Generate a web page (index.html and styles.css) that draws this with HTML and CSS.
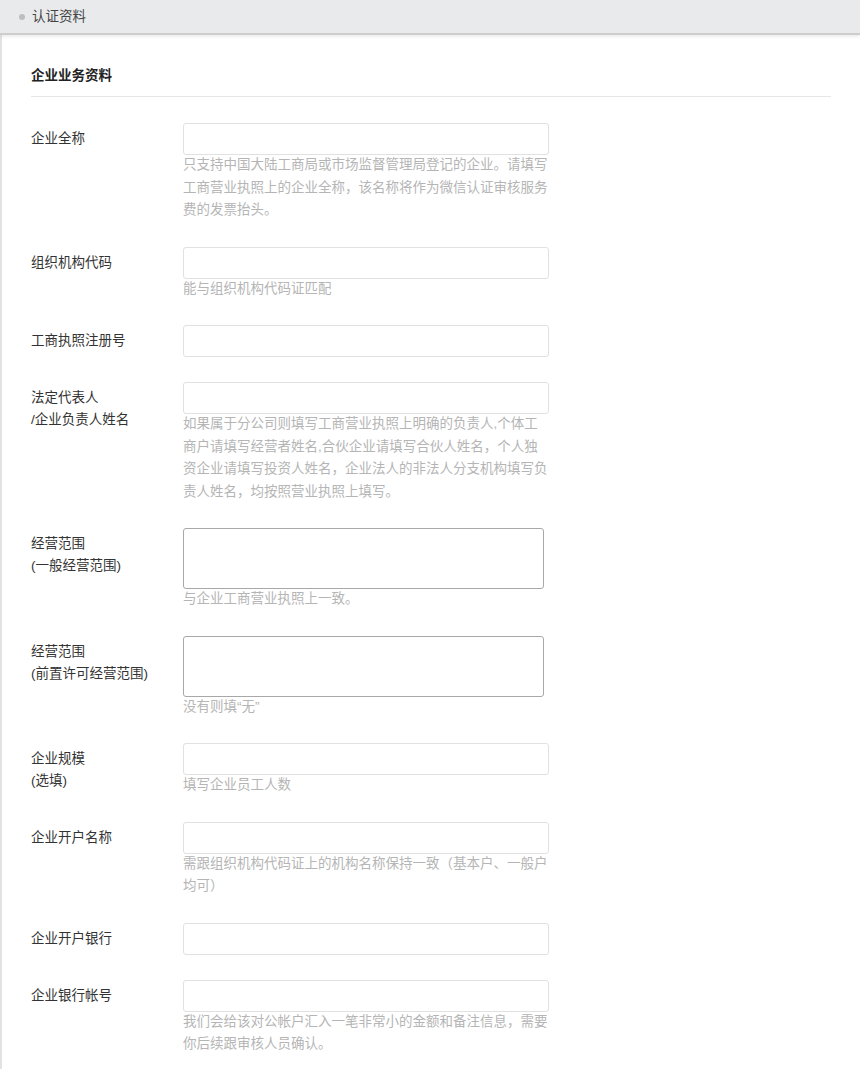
FILE: index.html
```html
<!DOCTYPE html>
<html lang="zh-CN">
<head>
    <meta charset="UTF-8">
    <meta name="viewport" content="width=device-width, initial-scale=1.0">
    <title>认证资料</title>
    <link rel="stylesheet" href="styles.css">
</head>
<body>
    <div class="page-header">
        <span class="dot"></span>
        <span class="page-title">认证资料</span>
    </div>

    <div class="content">
        <div class="section-title">企业业务资料</div>

        <div class="form-row">
            <div class="form-label">企业全称</div>
            <div class="form-field">
                <input type="text" class="text-input">
                <p class="hint">只支持中国大陆工商局或市场监督管理局登记的企业。请填写工商营业执照上的企业全称，该名称将作为微信认证审核服务费的发票抬头。</p>
            </div>
        </div>

        <div class="form-row">
            <div class="form-label">组织机构代码</div>
            <div class="form-field">
                <input type="text" class="text-input">
                <p class="hint">能与组织机构代码证匹配</p>
            </div>
        </div>

        <div class="form-row">
            <div class="form-label">工商执照注册号</div>
            <div class="form-field">
                <input type="text" class="text-input">
            </div>
        </div>

        <div class="form-row">
            <div class="form-label">法定代表人<br>/企业负责人姓名</div>
            <div class="form-field">
                <input type="text" class="text-input">
                <p class="hint">如果属于分公司则填写工商营业执照上明确的负责人,个体工商户请填写经营者姓名,合伙企业请填写合伙人姓名，个人独资企业请填写投资人姓名，企业法人的非法人分支机构填写负责人姓名，均按照营业执照上填写。</p>
            </div>
        </div>

        <div class="form-row">
            <div class="form-label">经营范围<br>(一般经营范围)</div>
            <div class="form-field">
                <textarea class="text-area"></textarea>
                <p class="hint">与企业工商营业执照上一致。</p>
            </div>
        </div>

        <div class="form-row">
            <div class="form-label">经营范围<br>(前置许可经营范围)</div>
            <div class="form-field">
                <textarea class="text-area"></textarea>
                <p class="hint">没有则填“无”</p>
            </div>
        </div>

        <div class="form-row">
            <div class="form-label">企业规模<br>(选填)</div>
            <div class="form-field">
                <input type="text" class="text-input">
                <p class="hint">填写企业员工人数</p>
            </div>
        </div>

        <div class="form-row">
            <div class="form-label">企业开户名称</div>
            <div class="form-field">
                <input type="text" class="text-input">
                <p class="hint">需跟组织机构代码证上的机构名称保持一致（基本户、一般户均可）</p>
            </div>
        </div>

        <div class="form-row">
            <div class="form-label">企业开户银行</div>
            <div class="form-field">
                <input type="text" class="text-input">
            </div>
        </div>

        <div class="form-row">
            <div class="form-label">企业银行帐号</div>
            <div class="form-field">
                <input type="text" class="text-input">
                <p class="hint">我们会给该对公帐户汇入一笔非常小的金额和备注信息，需要你后续跟审核人员确认。</p>
            </div>
        </div>
    </div>
</body>
</html>
```

FILE: styles.css
```css
* {
    margin: 0;
    padding: 0;
    box-sizing: border-box;
}

body {
    font-family: "Liberation Sans", "Noto Sans CJK SC", sans-serif;
    font-size: 13.5px;
    color: #333;
    background: #fff;
}

.page-header {
    height: 35px;
    background: #e9eaec;
    border-bottom: 2px solid #cdcdcd;
    box-shadow: 0 2px 3px rgba(0,0,0,0.07);
    display: flex;
    align-items: center;
    padding-left: 19px;
    position: relative;
    z-index: 1;
}

.dot {
    width: 6px;
    height: 6px;
    border-radius: 50%;
    background: #bdbdbd;
    margin-right: 7px;
}

.page-title {
    color: #444;
    line-height: 22px;
}

.content {
    border-left: 2px solid #e2e2e2;
    padding: 30px 0 0 29px;
    min-height: 1034px;
}

.section-title {
    width: 800px;
    font-weight: bold;
    color: #222;
    line-height: 22px;
    padding-bottom: 9px;
    border-bottom: 1px solid #e6e6e6;
    margin-bottom: 26px;
}

.form-row {
    display: flex;
    margin-bottom: 25px;
}

.form-label {
    width: 152px;
    flex-shrink: 0;
    padding-top: 5px;
    line-height: 22px;
    color: #333;
}

.form-field {
    width: 366px;
}

.text-input {
    display: block;
    width: 366px;
    height: 32px;
    border: 1px solid #e1e1e1;
    border-radius: 3px;
    background: #fff;
    outline: none;
}

.text-area {
    display: block;
    width: 361px;
    height: 61px;
    border: 1px solid #a8a8a8;
    border-radius: 3px;
    background: #fff;
    resize: none;
    outline: none;
}

.hint {
    margin-top: -1px;
    line-height: 22.5px;
    color: #b5b5b5;
}
```
